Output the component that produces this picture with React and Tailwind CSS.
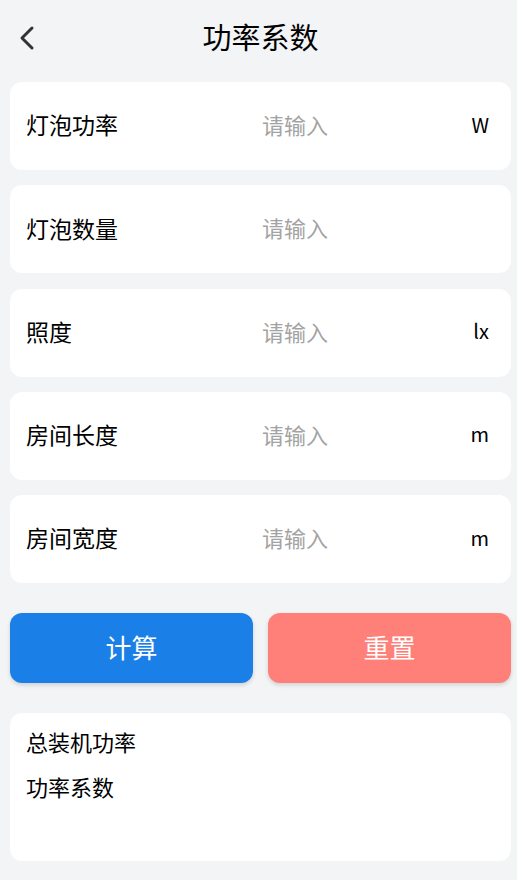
export default function App() {
  const rows = [
    { label: "灯泡功率", unit: "W" },
    { label: "灯泡数量", unit: "" },
    { label: "照度", unit: "lx" },
    { label: "房间长度", unit: "m" },
    { label: "房间宽度", unit: "m" },
  ];
  const font = { fontFamily: '"Noto Sans CJK SC", "Noto Sans", sans-serif' };
  return (
    <div className="w-[517px] h-[880px] bg-[#f3f4f6] text-black overflow-hidden" style={font}>
      <div className="relative h-[76px] flex items-center justify-center pl-[4px] pb-[3px]">
        <svg className="absolute left-[16px] top-[24px]" width="24" height="28" viewBox="0 0 24 28" fill="none">
          <path d="M16 4 L6 14 L16 24" stroke="#333" strokeWidth="3" strokeLinecap="round" strokeLinejoin="round" />
        </svg>
        <div className="text-[29px] leading-none">功率系数</div>
      </div>
      <div className="pl-[10px] pr-[6px] flex flex-col gap-[15.25px] mt-[6px]">
        {rows.map((r) => (
          <div key={r.label} className="h-[88px] bg-white rounded-[12px] flex items-center pl-[16px] pr-[22px] pb-[3px]">
            <div className="w-[236px] text-[23px]">{r.label}</div>
            <div className="flex-1 text-[22px] text-[#a3a3a3]">请输入</div>
            <div className="text-[20px]">{r.unit}</div>
          </div>
        ))}
      </div>
      <div className="pl-[10px] pr-[6px] mt-[30px] flex gap-[15px]">
        <button className="flex-1 h-[70px] rounded-[12px] bg-[#1a80e8] text-white text-[26px] pb-[3px] shadow-[0_2px_4px_rgba(0,0,0,0.15)]">计算</button>
        <button className="flex-1 h-[70px] rounded-[12px] bg-[#ff8079] text-white text-[26px] pb-[3px] shadow-[0_2px_4px_rgba(0,0,0,0.15)]">重置</button>
      </div>
      <div className="ml-[10px] mr-[6px] mt-[30px] h-[148px] bg-white rounded-[12px] pl-[16px] pt-[12px] flex flex-col gap-[12px]">
        <div className="text-[22px] leading-[33px]">总装机功率</div>
        <div className="text-[22px] leading-[33px]">功率系数</div>
      </div>
    </div>
  );
}
